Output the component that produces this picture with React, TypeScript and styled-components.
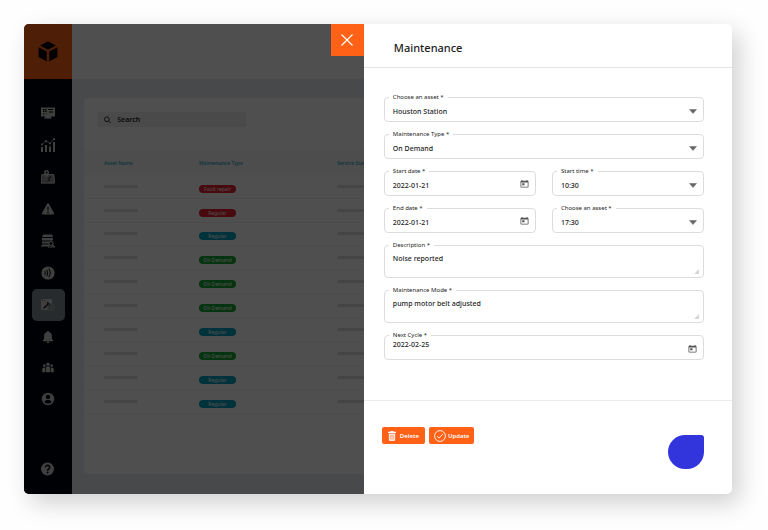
import React, { useId } from "react";
import styled, { createGlobalStyle } from "styled-components";

const Global = createGlobalStyle`
  *, *::before, *::after { box-sizing: border-box; }
  body {
    margin: 0;
    background: #fefefe;
    font-family: "Noto Sans", "Open Sans", sans-serif;
    color: #1c1c1c;
  }
  button, input, select, textarea { font: inherit; color: inherit; }
`;

const Page = styled.div`
  display: flex;
  min-height: 100vh;
  padding: 24px 36px 36px 24px;
`;

const Frame = styled.div`
  display: flex;
  flex: 1;
  min-width: 0;
  border-radius: 5px;
  background: #fff;
  box-shadow: 7px 9px 24px rgba(0, 0, 0, 0.19);
`;

const Workspace = styled.div`
  position: relative;
  display: flex;
  flex: 1;
  min-width: 0;
  overflow: hidden;
  border-radius: 5px 0 0 5px;
`;

const Backdrop = styled.div`
  position: absolute;
  inset: 0;
  background: rgba(0, 0, 0, 0.69);
`;

const Rail = styled.nav`
  display: flex;
  flex: 0 0 48px;
  flex-direction: column;
  align-items: center;
  padding-bottom: 9px;
  background: #03060f;
`;

const Logo = styled.a`
  display: flex;
  align-items: center;
  justify-content: center;
  align-self: stretch;
  height: 55px;
  margin-bottom: 18px;
  background: #ff6117;
`;

const RailButton = styled.button<{ $active?: boolean; $short?: boolean; $last?: boolean }>`
  display: flex;
  align-items: center;
  justify-content: center;
  width: 33px;
  height: ${(p) => (p.$short ? 31 : 32)}px;
  margin-top: ${(p) => (p.$last ? "auto" : "0")};
  padding: 0;
  border: 0;
  border-radius: 5px;
  background: ${(p) => (p.$active ? "#7d8a90" : "transparent")};
  color: #cacaca;
`;

const Main = styled.main`
  display: flex;
  flex: 1;
  flex-direction: column;
  min-width: 0;
  background: #e8ebee;
`;

const TopBar = styled.header`
  height: 55px;
  background: #fff;
`;

const Card = styled.section`
  flex: 1;
  margin: 19px 0 20px 12px;
  padding-top: 14px;
  overflow: hidden;
  border-radius: 4px 0 0 4px;
  background: #fff;
`;

const Search = styled.label`
  display: flex;
  align-items: center;
  gap: 6px;
  width: 149px;
  height: 15px;
  margin: 0 0 23px 13px;
  padding-left: 7px;
  border-radius: 2px;
  background: #efefef;
`;

const SearchInput = styled.input`
  width: 100%;
  min-width: 0;
  padding: 0;
  border: 0;
  outline: 0;
  background: transparent;
  font-size: 7px;
  font-weight: 600;
  &::placeholder { color: #1c1c1c; opacity: 1; }
`;

const Table = styled.table`
  width: 380px;
  height: 264px;
  border-collapse: collapse;
  table-layout: fixed;
`;

const HeadCell = styled.th<{ $width: number }>`
  width: ${(p) => p.$width}px;
  height: 25px;
  padding: 0;
  background: #f9f9f9;
  color: #159fc0;
  font-size: 5px;
  font-weight: 500;
  text-align: left;
  &:first-child { padding-left: 20px; }
`;

const Cell = styled.td`
  padding: 0;
  border-bottom: 1px solid #f3f3f3;
  vertical-align: middle;
  &:first-child { padding-left: 20px; }
`;

const Placeholder = styled.div`
  width: 34px;
  height: 3px;
  border-radius: 2px;
  background: #dedede;
`;

const tones = { red: "#e9212d", blue: "#08a4c4", green: "#16a534" };

const Pill = styled.div<{ $tone: keyof typeof tones }>`
  width: 37px;
  height: 8px;
  margin-top: 5px;
  border-radius: 4px;
  background: ${(p) => tones[p.$tone]};
  color: #fff;
  font-size: 5px;
  line-height: 8px;
  text-align: center;
  white-space: nowrap;
`;

const Drawer = styled.aside`
  position: relative;
  display: flex;
  flex: 0 0 52%;
  flex-direction: column;
  min-width: 0;
`;

const Close = styled.button`
  position: absolute;
  top: 0;
  right: 100%;
  display: flex;
  align-items: center;
  justify-content: center;
  width: 33px;
  height: 32px;
  padding: 0;
  border: 0;
  background: #ff6117;
  color: #fff;
`;

const DrawerHeader = styled.header`
  display: flex;
  align-items: center;
  height: 44px;
  padding: 4px 30px 0;
  border-bottom: 1px solid #e4e4e4;
`;

const Title = styled.h1`
  margin: 0;
  font-size: 11px;
  font-weight: 500;
  line-height: 16px;
`;

const Form = styled.form`
  display: flex;
  flex: 1;
  flex-direction: column;
`;

const Fields = styled.div`
  display: grid;
  grid-template-columns: 1fr 1fr;
  gap: 12px 16px;
  padding: 29px 28px 40px 20px;
`;

const Field = styled.div<{ $wide?: boolean; $tall?: boolean }>`
  position: relative;
  display: flex;
  grid-column: ${(p) => (p.$wide ? "1 / -1" : "auto")};
  height: ${(p) => (p.$tall ? 33 : 25)}px;
  border: 1px solid #dcdcdc;
  border-radius: 4px;
`;

const Label = styled.label`
  position: absolute;
  top: -5px;
  left: 4px;
  padding: 0 4px;
  background: #fff;
  font-size: 6px;
  line-height: 9px;
  white-space: nowrap;
`;

const controlStyle = `
  flex: 1;
  width: 100%;
  min-width: 0;
  margin: 0;
  border: 0;
  outline: 0;
  background: transparent;
  font-size: 7px;
  font-weight: 500;
  line-height: 10px;
`;

const Select = styled.select`
  ${controlStyle}
  padding: 5px 20px 0 8px;
  appearance: none;
`;

const Input = styled.input<{ $raised?: boolean }>`
  ${controlStyle}
  padding: ${(p) => (p.$raised ? "0 20px 6px 8px" : "5px 20px 0 8px")};
`;

const TextArea = styled.textarea`
  ${controlStyle}
  padding: 8px 20px 0 8px;
  overflow: hidden;
  resize: none;
`;

const Arrow = styled.svg`
  position: absolute;
  top: 11px;
  right: 6px;
  pointer-events: none;
`;

const Grip = styled.svg`
  position: absolute;
  right: 4px;
  bottom: 3px;
  pointer-events: none;
`;

const DateButton = styled.button<{ $low?: boolean }>`
  position: absolute;
  top: ${(p) => (p.$low ? 9 : 8)}px;
  right: 6px;
  display: flex;
  padding: 0;
  border: 0;
  background: transparent;
  color: #555;
`;

const Footer = styled.footer`
  display: flex;
  flex: 1;
  align-items: flex-start;
  gap: 4px;
  padding: 26px 28px 25px 18px;
  border-top: 1px solid #ebebeb;
`;

const Action = styled.button<{ $gap: number; $tight?: boolean }>`
  display: flex;
  align-items: center;
  gap: ${(p) => p.$gap}px;
  height: 17px;
  padding: 0 ${(p) => (p.$tight ? 5 : 6)}px;
  border: 0;
  border-radius: 2px;
  background: #ff6117;
  color: #fff;
  font-size: 6px;
  font-weight: 600;
`;

const ChatBubble = styled.button`
  width: 36px;
  height: 34px;
  margin: 8px 0 0 auto;
  padding: 0;
  border: 0;
  border-radius: 17px 3px 17px 17px;
  background: #3235dc;
`;

const Icon = ({ size = 14, children }: { size?: number; children: React.ReactNode }) => (
  <svg width={size} height={size} viewBox="0 0 14 14" fill="currentColor" aria-hidden="true">
    {children}
  </svg>
);

const line = { fill: "none", stroke: "currentColor", strokeLinecap: "round" as const };

const DashboardIcon = () => (
  <Icon>
    <path fillRule="evenodd" d="M0 1.500h14v9H9.600L11 12.500H3L4.400 10.500H0zM2 3v3h3.500V3zM7 3v1h5V3zM8 5.500v1h4v-1zM2 7.500v1h1.500v-1zM5 7.500v1h1v-1z" />
    <circle cx="3.600" cy="4.500" r="1" />
    <path d="M4.500 10a2.500 2 0 0 1 5 0v2h-5z" />
  </Icon>
);

const ChartIcon = () => (
  <Icon>
    <path d="M0 9h2v5H0zM4 7h2v7H4zM8 8.500h2V14H8zM12 4h2v10h-2z" />
    <path {...line} strokeWidth="0.8" d="M1 6.500 5 3l4 2.500L13 1" />
    <circle cx="1" cy="6.500" r="1" /><circle cx="5" cy="3.200" r="1.100" /><circle cx="9" cy="5.500" r="1.100" /><circle cx="13" cy="1.200" r="1.100" />
  </Icon>
);

const MapIcon = () => (
  <Icon>
    <path opacity=".7" d="M1.500 4h10.800q.9 0 1.100.9l.6 7.600q0 1-1 1H1q-1 0-1-1l.5-7.600Q.6 4 1.500 4z" />
    <path {...line} strokeWidth=".9" d="M1.300 4.500h11.300l.9 8.500H.5z" />
    <path fillRule="evenodd" d="M5.500 0a2.500 2.500 0 0 1 2.500 2.500C8 4.500 5.500 7.500 5.500 7.500S3 4.500 3 2.500A2.500 2.500 0 0 1 5.500 0zm0 1.500a1 1 0 1 0 0 2 1 1 0 0 0 0-2z" />
    <path d="m6.500 11.500 2.300-1.700L7.500 8 10 6.500" fill="none" stroke="#03060f" strokeWidth=".9" />
  </Icon>
);

const WarningIcon = () => (
  <Icon>
    <path fillRule="evenodd" d="M7 1.300c.5 0 .8.200 1 .6l4.900 9c.5 1 0 1.700-1 1.700H2.100c-1 0-1.500-.7-1-1.700l4.900-9c.2-.4.500-.6 1-.6zM6.300 5l.3 4h.8l.3-4zM7 9.700a.8.800 0 1 0 0 1.600.8.800 0 0 0 0-1.600z" />
  </Icon>
);

const ServerIcon = () => (
  <Icon>
    <path d="M2 .5h9l1 2.500H1zM1 4h11v2.500H1zM1 7.500h7.500L7.500 9.500H1zM1 10.500h7v2H0v-1h1z" />
    <path {...line} strokeWidth="1.100" d="M10 7.500a2 2 0 1 1-.1 0zM11.500 11l2 2M7.500 13h6" />
  </Icon>
);

const SignalIcon = () => (
  <Icon>
    <circle cx="7" cy="7" r="6.600" />
    <g fill="none" stroke="#03060f" strokeWidth="1" strokeLinecap="round">
      <path d="M4 5.500q.8 1.500 0 3M6 4.200q1.700 2.800 0 5.600M8.200 3q2.600 4 0 8" />
    </g>
  </Icon>
);

const MaintenanceIcon = () => (
  <Icon>
    <path d="M1 1h9q1 0 1 1v3.500A4 4 0 0 0 7 12H1q-1 0-1-1V2q0-1 1-1z" />
    <path d="M1.200 2.400h.8M3 2.400h.8" stroke="#3d4549" strokeWidth=".8" />
    <path d="m3 10 4.300-4.300M6.500 4.700l2 2" fill="none" stroke="#11181c" strokeWidth="1.500" strokeLinecap="round" />
    <g opacity=".4"><circle cx="10" cy="9.200" r="3.200" {...line} strokeWidth="1.600" strokeDasharray="1.500 .8" /><circle cx="10" cy="9.200" r="1.500" /></g>
  </Icon>
);

const BellIcon = () => (
  <Icon>
    <path d="M7 1c.7 0 1 .5 1 1.100 2 .5 2.900 2 2.900 4V9l1.300 1.400v.8H1.800v-.8L3.100 9V6.100c0-2 .9-3.500 2.900-4C6 1.500 6.300 1 7 1zM5.600 11.800h2.800a1.400 1.400 0 0 1-2.800 0z" />
  </Icon>
);

const TeamIcon = () => (
  <Icon size={12}>
    <circle cx="7" cy="2.500" r="1.900" /><circle cx="2.800" cy="4.200" r="1.500" /><circle cx="11.200" cy="4.200" r="1.500" />
    <path d="M4.300 12V7.200Q4.300 5 7 5t2.700 2.200V12zM.2 12V8.300Q.2 6.300 2.800 6.300h.7V12zM10.500 12V6.300h.7q2.600 0 2.600 2V12z" />
  </Icon>
);

const AccountIcon = () => (
  <Icon>
    <path fillRule="evenodd" d="M7 .8a6.200 6.200 0 1 0 0 12.400A6.200 6.200 0 0 0 7 .8zm0 2a2.200 2.200 0 1 1 0 4.400 2.200 2.200 0 0 1 0-4.400zM3.200 9.800C3.800 8.500 5.500 8 7 8s3.200.5 3.800 1.800A4.800 4.800 0 0 1 7 11.800a4.800 4.800 0 0 1-3.800-2z" />
  </Icon>
);

const HelpIcon = () => (
  <Icon>
    <circle cx="6.500" cy="7" r="6.500" />
    <path d="M4.500 5.300a2.100 2 0 1 1 3.300 1.600c-.9.600-1.200.9-1.200 1.800" fill="none" stroke="#03060f" strokeWidth="1.500" />
    <circle cx="6.600" cy="10.500" r=".9" fill="#03060f" />
  </Icon>
);

const CalendarIcon = () => (
  <svg width="9" height="8" viewBox="0 0 9 8" fill="currentColor" aria-hidden="true">
    <path fillRule="evenodd" d="M1.500 0h1v.7h4V0h1v.7h.2q.8 0 .8.8v5.200q0 .8-.8.8H1.300q-.8 0-.8-.8V1.500q0-.8.8-.8h.2zM1.300 2.600v4.100h6.400V2.600zM2.200 3.300h2.300v1.900H2.200z" />
  </svg>
);

const railItems = [
  { name: "Dashboard", icon: <DashboardIcon /> },
  { name: "Analytics", icon: <ChartIcon /> },
  { name: "Sites", icon: <MapIcon /> },
  { name: "Alerts", icon: <WarningIcon /> },
  { name: "Assets", icon: <ServerIcon /> },
  { name: "Sensors", icon: <SignalIcon /> },
  { name: "Maintenance", icon: <MaintenanceIcon />, active: true },
  { name: "Notifications", icon: <BellIcon />, short: true },
  { name: "Team", icon: <TeamIcon />, short: true },
  { name: "Account", icon: <AccountIcon />, short: true },
];

const rows: { type: string; tone: keyof typeof tones }[] = [
  { type: "Fault repair", tone: "red" },
  { type: "Regular", tone: "red" },
  { type: "Regular", tone: "blue" },
  { type: "On Demand", tone: "green" },
  { type: "On Demand", tone: "green" },
  { type: "On Demand", tone: "green" },
  { type: "Regular", tone: "blue" },
  { type: "On Demand", tone: "green" },
  { type: "Regular", tone: "blue" },
  { type: "Regular", tone: "blue" },
];

type FieldProps = { label: string; value: string; wide?: boolean; raised?: boolean };

function SelectField({ label, value, wide }: FieldProps) {
  const id = useId();
  return (
    <Field $wide={wide}>
      <Label htmlFor={id}>{label} *</Label>
      <Select id={id} defaultValue={value}>
        <option>{value}</option>
      </Select>
      <Arrow width="8" height="5" viewBox="0 0 8 5" aria-hidden="true">
        <path d="M.5.500h7L4 4.500z" fill="#666" stroke="#666" strokeWidth=".5" strokeLinejoin="round" />
      </Arrow>
    </Field>
  );
}

function DateField({ label, value, wide, raised }: FieldProps) {
  const id = useId();
  return (
    <Field $wide={wide}>
      <Label htmlFor={id}>{label} *</Label>
      <Input id={id} type="text" defaultValue={value} $raised={raised} />
      <DateButton type="button" aria-label={`Pick ${label.toLowerCase()}`} $low={raised}>
        <CalendarIcon />
      </DateButton>
    </Field>
  );
}

function TextField({ label, value }: FieldProps) {
  const id = useId();
  return (
    <Field $wide $tall>
      <Label htmlFor={id}>{label} *</Label>
      <TextArea id={id} defaultValue={value} />
      <Grip width="5" height="5" viewBox="0 0 5 5" aria-hidden="true">
        <path d="M5 0v5H0z" fill="#d6d6d6" />
      </Grip>
    </Field>
  );
}

export default function App() {
  return (
    <>
      <Global />
      <Page>
        <Frame>
          <Workspace>
            <Rail aria-label="Main">
              <Logo href="#" aria-label="Home">
                <svg width="20" height="21" viewBox="0 0 20 21" aria-hidden="true">
                  <path d="M10 .3 17.800 4.500 10 8.800 2.200 4.500zM.6 6.200 8.800 10.600v9.800L.6 15.900zM19.400 6.200 11.200 10.600v9.800l8.200-4.500z" fill="#04060c" />
                </svg>
              </Logo>
              {railItems.map((item) => (
                <RailButton key={item.name} aria-label={item.name} $active={item.active} $short={item.short}>
                  {item.icon}
                </RailButton>
              ))}
              <RailButton aria-label="Help" $last>
                <HelpIcon />
              </RailButton>
            </Rail>
            <Main>
              <TopBar />
              <Card>
                <Search>
                  <svg width="8" height="8" viewBox="0 0 8 8" fill="none" stroke="#222" aria-hidden="true">
                    <circle cx="3.200" cy="3.200" r="2.600" />
                    <path d="m5.200 5.200 2.500 2.500" />
                  </svg>
                  <SearchInput type="search" placeholder="Search" aria-label="Search" />
                </Search>
                <Table>
                  <thead>
                    <tr>
                      <HeadCell $width={115}>Asset Name</HeadCell>
                      <HeadCell $width={138}>Maintenance Type</HeadCell>
                      <HeadCell $width={127}>Service Start</HeadCell>
                    </tr>
                  </thead>
                  <tbody>
                    {rows.map((row, i) => (
                      <tr key={i}>
                        <Cell><Placeholder /></Cell>
                        <Cell><Pill $tone={row.tone}>{row.type}</Pill></Cell>
                        <Cell><Placeholder /></Cell>
                      </tr>
                    ))}
                  </tbody>
                </Table>
              </Card>
            </Main>
            <Backdrop />
          </Workspace>
          <Drawer aria-label="Maintenance">
            <Close aria-label="Close">
              <svg width="12" height="12" viewBox="0 0 12 12" fill="none" stroke="currentColor" strokeWidth="1.200" aria-hidden="true">
                <path d="m.5.500 11 11m0-11-11 11" />
              </svg>
            </Close>
            <DrawerHeader>
              <Title>Maintenance</Title>
            </DrawerHeader>
            <Form>
              <Fields>
                <SelectField wide label="Choose an asset" value="Houston Station" />
                <SelectField wide label="Maintenance Type" value="On Demand" />
                <DateField label="Start date" value="2022-01-21" />
                <SelectField label="Start time" value="10:30" />
                <DateField label="End date" value="2022-01-21" />
                <SelectField label="Choose an asset" value="17:30" />
                <TextField label="Description" value="Noise reported" />
                <TextField label="Maintenance Mode" value="pump motor belt adjusted" />
                <DateField wide raised label="Next Cycle" value="2022-02-25" />
              </Fields>
              <Footer>
                <Action type="button" $gap={4}>
                  <svg width="8" height="10" viewBox="0 0 8 10" fill="currentColor" aria-hidden="true">
                    <path d="M2.500 0h3v.8H8V2H0V.8h2.500z" />
                    <path d="M.8 2.500h6.400V9q0 1-1 1H1.800q-1 0-1-1z" opacity=".85" />
                    <path d="M2.700 3.800v4.700M4 3.800v4.700M5.300 3.800v4.700" stroke="#ff6117" strokeWidth=".4" />
                  </svg>
                  Delete
                </Action>
                <Action type="button" $gap={2} $tight>
                  <svg width="12" height="12" viewBox="0 0 12 12" fill="none" stroke="currentColor" strokeWidth=".9" aria-hidden="true">
                    <circle cx="6" cy="6" r="5.400" />
                    <path d="m3.200 6.200 1.900 1.900L8.900 4" />
                  </svg>
                  Update
                </Action>
                <ChatBubble type="button" aria-label="Open chat" />
              </Footer>
            </Form>
          </Drawer>
        </Frame>
      </Page>
    </>
  );
}
